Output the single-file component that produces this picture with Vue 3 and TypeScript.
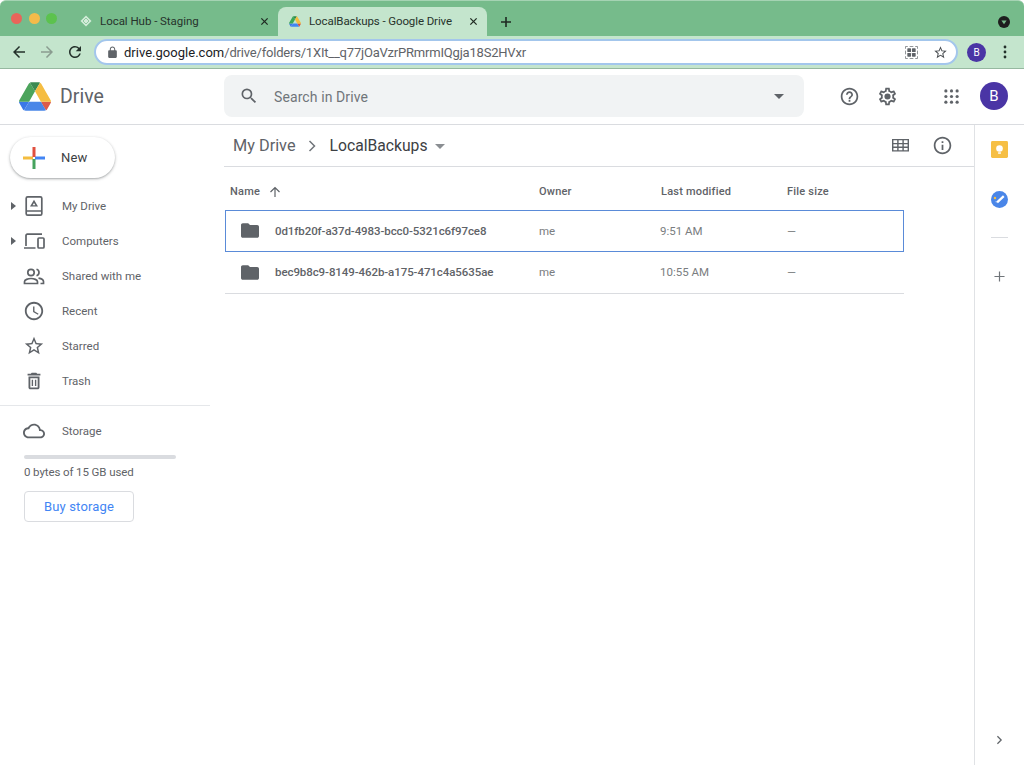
<script setup lang="ts">
interface NavItem { label: string; caret: boolean; icon: string }
const nav: NavItem[] = [
  { label: 'My Drive', caret: true, icon: 'drive' },
  { label: 'Computers', caret: true, icon: 'computers' },
  { label: 'Shared with me', caret: false, icon: 'shared' },
  { label: 'Recent', caret: false, icon: 'recent' },
  { label: 'Starred', caret: false, icon: 'star' },
  { label: 'Trash', caret: false, icon: 'trash' },
]
interface FileRow { name: string; modified: string; selected: boolean }
const files: FileRow[] = [
  { name: '0d1fb20f-a37d-4983-bcc0-5321c6f97ce8', modified: '9:51 AM', selected: true },
  { name: 'bec9b8c9-8149-462b-a175-471c4a5635ae', modified: '10:55 AM', selected: false },
]
const starPath = 'M22 9.24l-7.19-.62L12 2 9.19 8.63 2 9.24l5.46 4.73L5.82 21 12 17.27 18.18 21l-1.63-7.03L22 9.24zM12 15.4l-3.76 2.27 1-4.28-3.32-2.88 4.38-.38L12 6.1l1.71 4.04 4.38.38-3.32 2.88 1 4.28L12 15.4z'
const folderPath = 'M10 4H4c-1.1 0-1.99.9-1.99 2L2 18c0 1.1.9 2 2 2h16c1.1 0 2-.9 2-2V8c0-1.1-.9-2-2-2h-8l-2-2z'
</script>

<template>
  <div class="window">
    <div class="tabstrip">
      <div class="lights">
        <span class="light red"></span><span class="light yellow"></span><span class="light green"></span>
      </div>
      <div class="tab">
        <svg class="favicon" viewBox="0 0 12 12"><path d="M6 .5 11.500 6 6 11.500.5 6z" fill="#d3ecd9" /><path d="M6 3 9 6 6 9 3 6z" fill="none" stroke="#8fcaa0" stroke-width="1" /></svg>
        <span class="tab-title">Local Hub - Staging</span>
        <svg class="tab-x" viewBox="0 0 10 10"><path d="M1.500 1.500l7 7M8.500 1.500l-7 7" stroke="#1f2a22" stroke-width="1.400" /></svg>
      </div>
      <div class="tab active">
        <svg class="favicon" viewBox="0 0 87.3 78">
          <path d="m6.6 66.85 3.85 6.65c.8 1.4 1.95 2.5 3.3 3.3l13.75-23.8h-27.5c0 1.55.4 3.1 1.2 4.5z" fill="#3b78e7" />
          <path d="m43.65 25-13.75-23.8c-1.35.8-2.5 1.9-3.3 3.3l-25.4 44a9.06 9.06 0 0 0 -1.2 4.5h27.5z" fill="#3aa757" />
          <path d="m73.55 76.8c1.35-.8 2.5-1.9 3.3-3.3l1.6-2.75 7.65-13.25c.8-1.4 1.2-2.95 1.2-4.5h-27.502l5.852 11.5z" fill="#d9503f" />
          <path d="m43.65 25 13.75-23.8c-1.35-.8-2.9-1.2-4.5-1.2h-18.5c-1.6 0-3.15.45-4.5 1.2z" fill="#2e8b4a" />
          <path d="m59.8 53h-32.3l-13.75 23.8c1.35.8 2.9 1.2 4.5 1.2h50.8c1.6 0 3.15-.45 4.5-1.2z" fill="#4285f4" />
          <path d="m73.4 26.5-12.7-22c-.8-1.4-1.95-2.5-3.3-3.3l-13.75 23.8 16.15 28h27.45c0-1.55-.4-3.1-1.2-4.5z" fill="#f4bd3f" />
        </svg>
        <span class="tab-title">LocalBackups - Google Drive</span>
        <svg class="tab-x" viewBox="0 0 10 10"><path d="M1.500 1.500l7 7M8.500 1.500l-7 7" stroke="#1f2a22" stroke-width="1.400" /></svg>
      </div>
      <svg class="newtab" viewBox="0 0 12 12"><path d="M6 1v10M1 6h10" stroke="#1f2a22" stroke-width="1.600" /></svg>
      <svg class="profile-menu" viewBox="0 0 12 12"><circle cx="6" cy="6" r="6" fill="#1d1d1d" /><path d="M3.400 4.600h5.200L6 8.200z" fill="#76bb8b" /></svg>
    </div>

    <div class="toolbar">
      <svg class="tool first" viewBox="0 0 24 24"><path d="M20 11H7.830l5.590-5.590L12 4l-8 8 8 8 1.410-1.410L7.830 13H20v-2z" fill="#23302a" /></svg>
      <svg class="tool" viewBox="0 0 24 24"><path d="M4 11h12.170l-5.590-5.590L12 4l8 8-8 8-1.410-1.410L16.170 13H4v-2z" fill="#8a9c90" /></svg>
      <svg class="tool" viewBox="0 0 24 24"><path d="M17.650 6.350A7.958 7.958 0 0 0 12 4c-4.420 0-7.990 3.580-7.990 8s3.570 8 7.990 8c3.730 0 6.840-2.550 7.730-6h-2.080A5.990 5.990 0 0 1 12 18c-3.310 0-6-2.690-6-6s2.690-6 6-6c1.660 0 3.140.69 4.220 1.780L13 11h7V4l-2.350 2.350z" fill="#23302a" /></svg>
      <div class="omnibox">
        <svg class="lock" viewBox="0 0 24 24"><path d="M18 8h-1V6c0-2.760-2.240-5-5-5S7 3.240 7 6v2H6c-1.100 0-2 .9-2 2v10c0 1.100.9 2 2 2h12c1.100 0 2-.9 2-2V10c0-1.100-.9-2-2-2zm-2.900 0H8.900V6c0-1.710 1.390-3.100 3.100-3.100 1.710 0 3.100 1.390 3.100 3.100v2z" fill="#5f6368" /></svg>
        <span class="url"><span class="host">drive.google.com</span>/drive/folders/1XIt__q77jOaVzrPRmrmIQgja18S2HVxr</span>
        <svg class="qr" viewBox="0 0 14 14">
          <path d="M.5 3V.5H3M11 .5h2.500V3M.5 11v2.500H3M13.500 11v2.500H11M5 .5h4M5 13.500h4M.5 5v4M13.500 5v4" fill="none" stroke="#85898c" stroke-width="1" />
          <rect x="2.500" y="2.500" width="4" height="4" rx=".7" fill="#5f6368" /><rect x="7.500" y="2.500" width="4" height="4" rx=".7" fill="#5f6368" />
          <rect x="2.500" y="7.500" width="4" height="4" rx=".7" fill="#5f6368" /><rect x="7.500" y="7.500" width="4" height="4" rx=".7" fill="#5f6368" />
        </svg>
        <svg class="omni-star" viewBox="0 0 24 24"><path :d="starPath" fill="#4a4e52" /></svg>
      </div>
      <span class="mini-avatar">B</span>
      <svg class="dots" viewBox="0 0 4 14"><circle cx="2" cy="2" r="1.400" fill="#23302a" /><circle cx="2" cy="7" r="1.400" fill="#23302a" /><circle cx="2" cy="12" r="1.400" fill="#23302a" /></svg>
    </div>

    <header class="appbar">
      <div class="brand">
        <svg class="logo" viewBox="0 0 87.3 78">
          <path d="m6.6 66.85 3.85 6.65c.8 1.4 1.95 2.5 3.3 3.3l13.75-23.8h-27.5c0 1.55.4 3.1 1.2 4.5z" fill="#3b78e7" />
          <path d="m43.65 25-13.75-23.8c-1.35.8-2.5 1.9-3.3 3.3l-25.4 44a9.06 9.06 0 0 0 -1.2 4.5h27.5z" fill="#4ca45c" />
          <path d="m73.55 76.8c1.35-.8 2.5-1.9 3.3-3.3l1.6-2.75 7.65-13.25c.8-1.4 1.2-2.95 1.2-4.5h-27.502l5.852 11.5z" fill="#dc5b4a" />
          <path d="m43.65 25 13.75-23.8c-1.35-.8-2.9-1.2-4.5-1.2h-18.5c-1.6 0-3.15.45-4.5 1.2z" fill="#3b8a52" />
          <path d="m59.8 53h-32.3l-13.75 23.8c1.35.8 2.9 1.2 4.5 1.2h50.8c1.6 0 3.15-.45 4.5-1.2z" fill="#4a86e8" />
          <path d="m73.4 26.5-12.7-22c-.8-1.4-1.95-2.5-3.3-3.3l-13.75 23.8 16.15 28h27.45c0-1.55-.4-3.1-1.2-4.5z" fill="#f5bd42" />
        </svg>
        <span class="brand-name">Drive</span>
      </div>
      <div class="search">
        <svg class="search-icon" viewBox="0 0 24 24"><path d="M15.500 14h-.79l-.28-.27A6.471 6.471 0 0 0 16 9.500 6.500 6.500 0 1 0 9.500 16c1.610 0 3.090-.59 4.230-1.570l.27.28v.79l5 4.990L20.490 19l-4.990-5zm-6 0C7.010 14 5 11.990 5 9.500S7.010 5 9.500 5 14 7.010 14 9.500 11.990 14 9.500 14z" fill="#5f6368" /></svg>
        <span class="search-text">Search in Drive</span>
        <span class="search-caret"></span>
      </div>
      <div class="bar-actions">
        <svg class="bar-icon" viewBox="0 0 24 24"><path d="M11 18h2v-2h-2v2zm1-16C6.480 2 2 6.480 2 12s4.480 10 10 10 10-4.480 10-10S17.520 2 12 2zm0 18c-4.410 0-8-3.590-8-8s3.590-8 8-8 8 3.590 8 8-3.590 8-8 8zm0-14c-2.210 0-4 1.790-4 4h2c0-1.100.9-2 2-2s2 .9 2 2c0 2-3 1.750-3 5h2c0-2.250 3-2.500 3-5 0-2.210-1.790-4-4-4z" fill="#5f6368" /></svg>
        <svg class="bar-icon gear" viewBox="0 0 24 24"><path d="M19.43 12.98c.04-.32.07-.64.07-.98 0-.34-.03-.66-.07-.98l2.11-1.65c.19-.15.24-.42.12-.64l-2-3.46c-.09-.16-.26-.25-.44-.25-.06 0-.12.01-.17.03l-2.49 1c-.52-.4-1.08-.73-1.69-.98l-.38-2.65C14.46 2.18 14.25 2 14 2h-4c-.25 0-.46.18-.49.42l-.38 2.65c-.61.25-1.17.59-1.69.98l-2.49-1c-.06-.02-.12-.03-.18-.03-.17 0-.34.09-.43.25l-2 3.46c-.13.22-.07.49.12.64l2.11 1.65c-.04.32-.07.65-.07.98 0 .33.03.66.07.98l-2.11 1.65c-.19.15-.24.42-.12.64l2 3.46c.09.16.26.25.44.25.06 0 .12-.01.17-.03l2.49-1c.52.4 1.08.73 1.69.98l.38 2.65c.03.24.24.42.49.42h4c.25 0 .46-.18.49-.42l.38-2.65c.61-.25 1.17-.59 1.69-.98l2.49 1c.06.02.12.03.18.03.17 0 .34-.09.43-.25l2-3.46c.12-.22.07-.49-.12-.64l-2.11-1.65zm-1.98-1.71c.04.31.05.52.05.73 0 .21-.02.43-.05.73l-.14 1.13.89.7 1.08.84-.7 1.21-1.27-.51-1.04-.42-.9.68c-.43.32-.84.56-1.25.73l-1.06.43-.16 1.13-.2 1.35h-1.4l-.19-1.35-.16-1.13-1.06-.43c-.43-.18-.83-.41-1.23-.71l-.91-.7-1.06.43-1.27.51-.7-1.21 1.08-.84.89-.7-.14-1.13c-.03-.31-.05-.54-.05-.74s.02-.43.05-.73l.14-1.13-.89-.7-1.08-.84.7-1.21 1.27.51 1.04.42.9-.68c.43-.32.84-.56 1.25-.73l1.06-.43.16-1.13.2-1.35h1.39l.19 1.35.16 1.13 1.06.43c.43.18.83.41 1.23.71l.91.7 1.06-.43 1.27-.51.7 1.21-1.07.85-.89.7.14 1.13z" fill="#5f6368" /><circle cx="12" cy="12" r="3.500" fill="#5f6368" /></svg>
        <svg class="apps" viewBox="0 0 16 16"><g fill="#5f6368"><circle cx="2" cy="2" r="1.700" /><circle cx="8" cy="2" r="1.700" /><circle cx="14" cy="2" r="1.700" /><circle cx="2" cy="8" r="1.700" /><circle cx="8" cy="8" r="1.700" /><circle cx="14" cy="8" r="1.700" /><circle cx="2" cy="14" r="1.700" /><circle cx="8" cy="14" r="1.700" /><circle cx="14" cy="14" r="1.700" /></g></svg>
        <span class="avatar">B</span>
      </div>
    </header>

    <div class="body">
      <aside class="sidebar">
        <button class="new-btn">
          <svg class="plus" viewBox="0 0 22 22">
            <rect x="0" y="9.500" width="10" height="3" fill="#f4bd3f" />
            <rect x="12" y="9.500" width="10" height="3" fill="#4285f4" />
            <rect x="9.500" y="0" width="3" height="10" fill="#e0503f" />
            <rect x="9.500" y="12" width="3" height="10" fill="#46a35e" />
          </svg>
          <span>New</span>
        </button>
        <nav class="nav">
          <div v-for="item in nav" :key="item.label" class="nav-item">
            <span class="caret-slot"><span v-if="item.caret" class="caret"></span></span>
            <span class="nav-icon">
              <svg v-if="item.icon === 'drive'" class="i22" viewBox="0 0 22 22"><rect x="3.200" y="1.800" width="15.600" height="18.400" rx="1.500" fill="none" stroke="#5f6368" stroke-width="1.700" /><path d="M3.500 16h15" stroke="#5f6368" stroke-width="1.500" /><path d="M11 4.800 15 11.500H7z" fill="#5f6368" /><path d="M11 8 12.400 10.300H9.600z" fill="#fff" /></svg>
              <svg v-else-if="item.icon === 'computers'" class="i22 wide" viewBox="0 0 22 16"><path d="M1 15h11.500M3 13V2.500C3 1.700 3.500 1.200 4.300 1.200H19" fill="none" stroke="#5f6368" stroke-width="1.700" /><rect x="15" y="5" width="6" height="10" rx="1" fill="none" stroke="#5f6368" stroke-width="1.700" /></svg>
              <svg v-else-if="item.icon === 'shared'" class="i22" viewBox="0 0 22 22"><circle cx="8" cy="7.500" r="3.200" fill="none" stroke="#5f6368" stroke-width="1.700" /><path d="M1.500 18.500v-1.800c0-2 3.600-3.200 6.500-3.200s6.500 1.200 6.500 3.200v1.800z" fill="none" stroke="#5f6368" stroke-width="1.700" /><path d="M13.500 4.300a3.300 3.300 0 0 1 0 6.400M15.500 13.200c2.700.4 5 1.500 5 3.400v1.900h-3" fill="none" stroke="#5f6368" stroke-width="1.700" /></svg>
              <svg v-else-if="item.icon === 'recent'" class="i22" viewBox="0 0 24 24"><path d="M11.990 2C6.470 2 2 6.480 2 12s4.470 10 9.990 10C17.520 22 22 17.520 22 12S17.520 2 11.990 2zM12 20c-4.420 0-8-3.580-8-8s3.580-8 8-8 8 3.580 8 8-3.580 8-8 8zm.5-13H11v6l5.250 3.150.75-1.230-4.500-2.670z" fill="#5f6368" /></svg>
              <svg v-else-if="item.icon === 'star'" class="i22" viewBox="0 0 24 24"><path :d="starPath" fill="#5f6368" /></svg>
              <svg v-else class="i22" viewBox="0 0 24 24"><path d="M6 19c0 1.100.9 2 2 2h8c1.100 0 2-.9 2-2V7H6v12zM8 9h8v10H8V9zm1.500 1.500H11v7H9.500zm3.500 0h1.500v7H13zM15.500 4l-1-1h-5l-1 1H5v2h14V4z" fill="#5f6368" /></svg>
            </span>
            <span class="nav-label">{{ item.label }}</span>
          </div>
        </nav>
        <div class="side-rule"></div>
        <div class="nav-item storage">
          <span class="caret-slot"></span>
          <span class="nav-icon"><svg class="i22" viewBox="0 0 24 24"><path d="M19.350 10.040C18.670 6.590 15.640 4 12 4 9.110 4 6.600 5.640 5.350 8.040 2.340 8.360 0 10.910 0 14c0 3.310 2.690 6 6 6h13c2.760 0 5-2.240 5-5 0-2.640-2.050-4.780-4.650-4.960zM19 18H6c-2.210 0-4-1.790-4-4s1.790-4 4-4h.71C7.370 7.690 9.480 6 12 6c3.040 0 5.500 2.460 5.500 5.500v.5H19c1.660 0 3 1.340 3 3s-1.340 3-3 3z" fill="#5f6368" /></svg></span>
          <span class="nav-label">Storage</span>
        </div>
        <div class="quota">
          <div class="quota-bar"></div>
          <div class="quota-text">0 bytes of 15 GB used</div>
          <button class="buy">Buy storage</button>
        </div>
      </aside>

      <main class="main">
        <div class="crumbs">
          <span class="crumb">My Drive</span>
          <svg class="crumb-sep" viewBox="0 0 8 12"><path d="M1.500 1 6.500 6l-5 5" fill="none" stroke="#70757a" stroke-width="1.500" /></svg>
          <span class="crumb current">LocalBackups</span>
          <span class="crumb-caret"></span>
          <div class="crumb-actions">
            <svg class="grid-icon" viewBox="0 0 18 14" preserveAspectRatio="none"><path d="M0 0h18v14H0zM1.500 1.500v3h4v-3zm5.500 0v3h4v-3zm5.500 0v3h4v-3zM1.500 6v2.500h4V6zM7 6v2.500h4V6zm5.500 0v2.500h4V6zM1.500 10v2.500h4V10zM7 10v2.500h4V10zm5.500 0v2.500h4V10z" fill="#5f6368" fill-rule="evenodd" /></svg>
            <svg class="info-icon" viewBox="0 0 24 24"><path d="M11 17h2v-6h-2v6zm1-15C6.480 2 2 6.480 2 12s4.480 10 10 10 10-4.480 10-10S17.520 2 12 2zm0 18c-4.410 0-8-3.590-8-8s3.590-8 8-8 8 3.590 8 8-3.590 8-8 8zM11 9h2V7h-2v2z" fill="#5f6368" /></svg>
          </div>
        </div>
        <div class="table">
          <div class="thead">
            <div class="c-name head-name">Name
              <svg class="sort" viewBox="0 0 12 12"><path d="M6 11V1.500M1.500 6 6 1.500 10.500 6" fill="none" stroke="#5f6368" stroke-width="1.200" /></svg>
            </div>
            <div class="c-owner">Owner</div>
            <div class="c-mod">Last modified</div>
            <div class="c-size">File size</div>
          </div>
          <div v-for="f in files" :key="f.name" class="row" :class="{ selected: f.selected }">
            <div class="c-name cell-name">
              <svg class="folder" viewBox="2 4 20 16"><path :d="folderPath" fill="#5f6368" /></svg>
              <span>{{ f.name }}</span>
            </div>
            <div class="c-owner cell cell-owner">me</div>
            <div class="c-mod cell cell-mod">{{ f.modified }}</div>
            <div class="c-size cell">—</div>
          </div>
        </div>
      </main>

      <aside class="rail">
        <svg class="rail-icon keep" viewBox="0 0 18 18"><rect width="18" height="18" rx="1.500" fill="#f6bf44" /><circle cx="9" cy="8" r="3.500" fill="#fff" /><rect x="7.500" y="12" width="3" height="1.500" fill="#fff" /></svg>
        <svg class="rail-icon tasks" viewBox="0 0 18 18"><circle cx="9" cy="9" r="9" fill="#4a86e8" /><path d="M6.500 12 13.500 5.500" stroke="#fff" stroke-width="2.400" /><path d="M6.500 12h-1.500v-1.500z" fill="#fff" /><circle cx="4.200" cy="7.500" r="1.300" fill="#f6bf44" /></svg>
        <div class="rail-rule"></div>
        <svg class="rail-plus" viewBox="0 0 12 12"><path d="M6 .5v11M.5 6h11" stroke="#70757a" stroke-width="1.300" /></svg>
        <svg class="rail-chev" viewBox="0 0 8 12"><path d="M1.500 1.500 6 6l-4.500 4.500" fill="none" stroke="#5f6368" stroke-width="1.500" /></svg>
      </aside>
    </div>
  </div>
</template>

<style>
html, body { margin: 0; background: #fff; }
</style>

<style scoped>
.window { width: 1024px; height: 765px; display: flex; flex-direction: column; overflow: hidden; font-family: Roboto, "Liberation Sans", sans-serif; color: #5f6368; background: #fff; }
.tabstrip { height: 36px; flex: none; background: #76bb8b; border-top: 1px solid #a5d3b3; box-sizing: border-box; border-radius: 6px 6px 0 0; display: flex; align-items: flex-end; position: relative; padding-left: 70px; }
.lights { position: absolute; left: 11px; top: 12px; display: flex; gap: 6.500px; }
.light { width: 11px; height: 11px; border-radius: 50%; }
.red { background: #e8655a; } .yellow { background: #f5bb4a; } .green { background: #5cc24e; }
.tab { width: 208px; height: 29px; display: flex; align-items: center; box-sizing: border-box; padding: 0 9px 1px 10px; font-size: 11.500px; color: #27332b; letter-spacing: -.04px; }
.tab.active { width: 209px; background: #c4e5cd; border-radius: 8px 8px 0 0; padding-left: 11px; letter-spacing: -.1px; }
.favicon { width: 12px; height: 11px; margin-right: 8px; flex: none; }
.tab:not(.active) .favicon { height: 12px; }
.tab-title { flex: 1; white-space: nowrap; }
.tab-x { width: 9px; height: 9px; flex: none; }
.newtab { width: 12px; height: 12px; position: absolute; left: 500px; top: 15px; }
.profile-menu { width: 12px; height: 12px; position: absolute; left: 998px; top: 15px; }

.toolbar { height: 33px; flex: none; background: #c4e5cd; border-bottom: 1px solid #96b8a0; box-sizing: border-box; display: flex; align-items: center; }
.tool { width: 18px; height: 18px; margin-right: 10px; flex: none; }
.tool.first { margin-left: 10px; }
.omnibox { width: 864px; height: 26px; box-sizing: border-box; background: #fff; border: 2px solid #a3c6ec; border-radius: 13px; display: flex; align-items: center; padding: 0 8px 0 10px; flex: none; }
.lock { width: 13px; height: 13px; margin-right: 5px; flex: none; }
.url { flex: 1; font-size: 13px; color: #5f6368; letter-spacing: -.2px; white-space: nowrap; }
.host { color: #202124; letter-spacing: .02px; }
.qr { width: 13px; height: 13px; margin-right: 15px; flex: none; }
.omni-star { width: 15px; height: 15px; flex: none; }
.mini-avatar { width: 19px; height: 19px; border-radius: 50%; background: #4a35a5; color: #fff; font-size: 10px; display: flex; align-items: center; justify-content: center; margin-left: 9px; flex: none; }
.dots { width: 4px; height: 14px; margin-left: 17px; flex: none; }

.appbar { height: 56px; flex: none; border-bottom: 1px solid #dadce0; box-sizing: border-box; display: flex; align-items: center; padding-bottom: 1px; }
.brand { width: 224px; flex: none; display: flex; align-items: center; padding-left: 19px; box-sizing: border-box; }
.logo { width: 32px; height: 29px; flex: none; }
.brand-name { font-size: 19.500px; color: #5f6368; margin-left: 9px; padding-top: 1px; }
.search { width: 580px; height: 42px; flex: none; background: #f1f3f4; border-radius: 8px; display: flex; align-items: center; padding: 0 20px 0 15px; box-sizing: border-box; }
.search-icon { width: 20px; height: 20px; flex: none; }
.search-text { flex: 1; font-size: 14px; color: #70757a; margin-left: 15px; letter-spacing: .1px; padding-top: 1px; }
.search-caret { width: 0; height: 0; border-left: 5px solid transparent; border-right: 5px solid transparent; border-top: 5px solid #5f6368; }
.bar-actions { flex: 1; display: flex; align-items: center; padding-left: 35px; }
.bar-icon { width: 21px; height: 21px; flex: none; }
.gear { margin-left: 17px; }
.apps { width: 15px; height: 15px; margin-left: 46px; flex: none; }
.avatar { width: 28px; height: 28px; border-radius: 50%; background: #4a35a5; color: #fff; font-size: 15px; display: flex; align-items: center; justify-content: center; margin-left: 21px; flex: none; }

.body { flex: 1; display: flex; min-height: 0; }
.sidebar { width: 210px; flex: none; padding-top: 12px; box-sizing: border-box; }
.new-btn { width: 105px; height: 41px; margin-left: 10px; border: 0; background: #fff; border-radius: 21px; box-shadow: 0 1px 3px rgba(60,64,67,.4), 0 1px 1px rgba(60,64,67,.1); display: flex; align-items: center; padding: 0 0 0 13px; box-sizing: border-box; font-family: inherit; font-size: 13px; color: #3c4043; letter-spacing: .15px; }
.plus { width: 22px; height: 22px; margin-right: 16px; flex: none; }
.nav { margin-top: 10px; }
.nav-item { height: 35px; display: flex; align-items: center; }
.caret-slot { width: 21px; flex: none; display: flex; justify-content: flex-start; padding-left: 11px; box-sizing: border-box; }
.caret { width: 0; height: 0; border-top: 4px solid transparent; border-bottom: 4px solid transparent; border-left: 5px solid #5f6368; }
.nav-icon { width: 26px; display: flex; justify-content: center; flex: none; }
.i22 { width: 22px; height: 22px; flex: none; }
.i22.wide { height: 16px; }
.nav-label { margin-left: 15px; font-size: 11.500px; color: #5f6368; letter-spacing: 0; }
.side-rule { height: 1px; background: #e5e7ea; margin-top: 7px; }
.storage { margin-top: 7px; }
.quota { padding: 7px 0 0 24px; }
.quota-bar { width: 152px; height: 4px; background: #dadce0; border-radius: 2px; }
.quota-text { font-size: 11.500px; color: #5f6368; margin-top: 6px; letter-spacing: -.1px; line-height: 15px; }
.buy { width: 110px; height: 31px; margin-top: 11px; background: #fff; border: 1px solid #dadce0; border-radius: 4px; color: #4285f4; font-family: inherit; font-size: 13px; letter-spacing: .15px; padding: 0; display: block; }

.main { flex: 1; min-width: 0; padding-left: 14px; }
.crumbs { height: 42px; padding-left: 9px; border-bottom: 1px solid #dadce0; box-sizing: border-box; display: flex; align-items: center; }
.crumb { font-size: 16.300px; color: #5f6368; }
.crumb.current { color: #3c4043; font-size: 15.700px; }
.crumb-sep { width: 8px; height: 12px; margin: 0 14px 0 12px; flex: none; }
.crumb-caret { width: 0; height: 0; border-left: 5px solid transparent; border-right: 5px solid transparent; border-top: 5px solid #8a8e92; margin-left: 7px; margin-top: 2px; }
.crumb-actions { margin-left: auto; display: flex; align-items: center; padding-right: 21px; }
.grid-icon { width: 17px; height: 12.500px; flex: none; }
.info-icon { width: 21px; height: 21px; margin-left: 23px; flex: none; }
.table { width: 679px; margin-left: 1px; }
.thead, .row { display: flex; align-items: center; }
.thead { height: 43px; font-size: 11px; color: #5f6368; font-weight: 500; letter-spacing: .2px; box-sizing: border-box; padding: 6px 0 0 0; }
.c-name { width: 314px; flex: none; display: flex; align-items: center; }
.head-name { padding-left: 5px; box-sizing: border-box; }
.sort { width: 12px; height: 12px; margin-left: 9px; }
.c-owner { width: 122px; flex: none; }
.c-mod { width: 126px; flex: none; }
.c-size { flex: 1; }
.row { height: 42px; box-sizing: border-box; border-bottom: 1px solid #dadce0; padding-bottom: 1px; }
.row.selected { border: 1px solid #5a8bd8; }
.row.selected .c-name { width: 313px; }
.folder { width: 18px; height: 15px; margin: 0 16px 0 16px; flex: none; }
.row.selected .folder { margin-left: 15px; }
.cell-name { font-size: 11.500px; font-weight: 500; color: #5f6368; letter-spacing: -.08px; }
.cell { font-size: 11.500px; color: #7a7d80; letter-spacing: 0; }
.cell-owner { width: 121px; }
.cell-mod { width: 127px; }

.rail { width: 50px; flex: none; border-left: 1px solid #e0e2e5; box-sizing: border-box; display: flex; flex-direction: column; align-items: center; padding-top: 16px; }
.rail-icon { width: 17px; height: 17px; flex: none; }
.tasks { margin-top: 33px; }
.rail-rule { width: 17px; height: 1px; background: #dadce0; margin-top: 29px; }
.rail-plus { width: 11px; height: 11px; margin-top: 33px; flex: none; }
.rail-chev { width: 7px; height: 10px; margin-top: auto; margin-bottom: 20px; flex: none; }
</style>
